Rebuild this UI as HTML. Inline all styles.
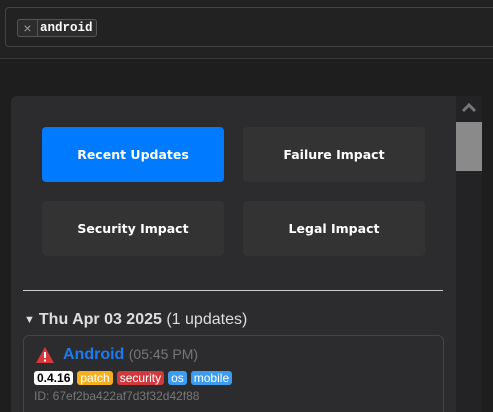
<!DOCTYPE html>
<html><head><style>
*{margin:0;padding:0;box-sizing:border-box}
html,body{width:493px;height:412px;overflow:hidden}
body{background:#1e1e1e;font-family:"Liberation Sans",Arial,sans-serif;position:relative}
.top{position:absolute;left:0;top:0;width:493px;height:59px;background:#222;border-bottom:1px solid #3a3a3a}
.inp{position:absolute;left:5px;top:7px;width:488px;height:40px;border:1px solid #444;border-right:none;border-radius:4px 0 0 4px;background:#222}
.tag{position:absolute;left:17px;top:19px;width:80px;height:18px;border:1px solid #555;border-radius:3px;background:#2c2c2c}
.tag .x{position:absolute;left:0;top:0;width:20px;height:16px;border-right:1px solid #555;color:#999;font-size:14px;text-align:center;line-height:16px}
.tag .t{position:absolute;left:22px;top:0;line-height:16px;color:#fff;font-family:"Liberation Mono",monospace;font-size:12.5px;font-weight:bold}
.panel{position:absolute;left:11px;top:96px;width:445px;height:316px;background:#2c2c2e;border-radius:6px 0 0 0;overflow:hidden}
.sb{position:absolute;left:456px;top:96px;width:26px;height:316px;background:#232326}
.thumb{position:absolute;left:456px;top:122px;width:26px;height:49px;background:#8a8a8a}
.btn{position:absolute;width:182px;height:55px;border-radius:4px;background:#333;color:#fff;font-family:"DejaVu Sans",Verdana,sans-serif;font-weight:bold;font-size:12.5px;display:flex;align-items:center;justify-content:center}
.hr{position:absolute;left:23px;top:290px;width:420px;height:1px;background:#ccc}
.h{position:absolute;left:24px;top:311px;color:#ddd;font-size:16px;white-space:nowrap}
.card{position:absolute;left:12px;top:239px;width:421px;height:100px;border:1px solid #444;border-radius:6px}
.b{display:inline-block;font-size:12px;line-height:14px;padding:0 3px;border-radius:3px;color:#fff;margin-right:4px}
</style></head><body>
<div class="top"><div class="inp"></div>
<div class="tag"><div class="x">×</div><div class="t">android</div></div></div>
<div class="sb"></div>
<svg style="position:absolute;left:461px;top:101px" width="16" height="12"><path d="M2 10 L8 4 L14 10" stroke="#777" stroke-width="3" fill="none"/></svg>
<div class="thumb"></div>
<div class="panel">
<div class="card">
<svg style="position:absolute;left:11px;top:10px" width="20" height="18"><path d="M10 1 L19 17 L1 17 Z" fill="#d9383a"/><rect x="9" y="6" width="2" height="6" fill="#fff"/><rect x="9" y="13.5" width="2" height="2" fill="#fff"/></svg>
<div style="position:absolute;left:39px;top:10px;font-size:16px;color:#1a7cf5;font-weight:bold">Android <span style="font-weight:normal;color:#777;font-size:14px">(05:45 PM)</span></div>
<div style="position:absolute;left:10px;top:33px;white-space:nowrap">
<span class="b" style="background:#fff;color:#000;font-weight:bold">0.4.16</span><span class="b" style="background:#f5b020">patch</span><span class="b" style="background:#d03a3f">security</span><span class="b" style="background:#3b9cf0">os</span><span class="b" style="background:#3b9cf0">mobile</span></div>
<div style="position:absolute;left:10px;top:53px;font-size:12px;color:#777">ID: 67ef2ba422af7d3f32d42f88</div>
</div>
</div>
<div class="btn" style="left:42px;top:127px;background:#007bff">Recent Updates</div>
<div class="btn" style="left:243px;top:127px">Failure Impact</div>
<div class="btn" style="left:42px;top:201px">Security Impact</div>
<div class="btn" style="left:243px;top:201px">Legal Impact</div>
<div class="hr"></div>
<div class="h"><span style="font-size:11px;margin-right:4px;vertical-align:1px">▼</span><b>Thu Apr 03 2025</b> (1 updates)</div>
</body></html>
